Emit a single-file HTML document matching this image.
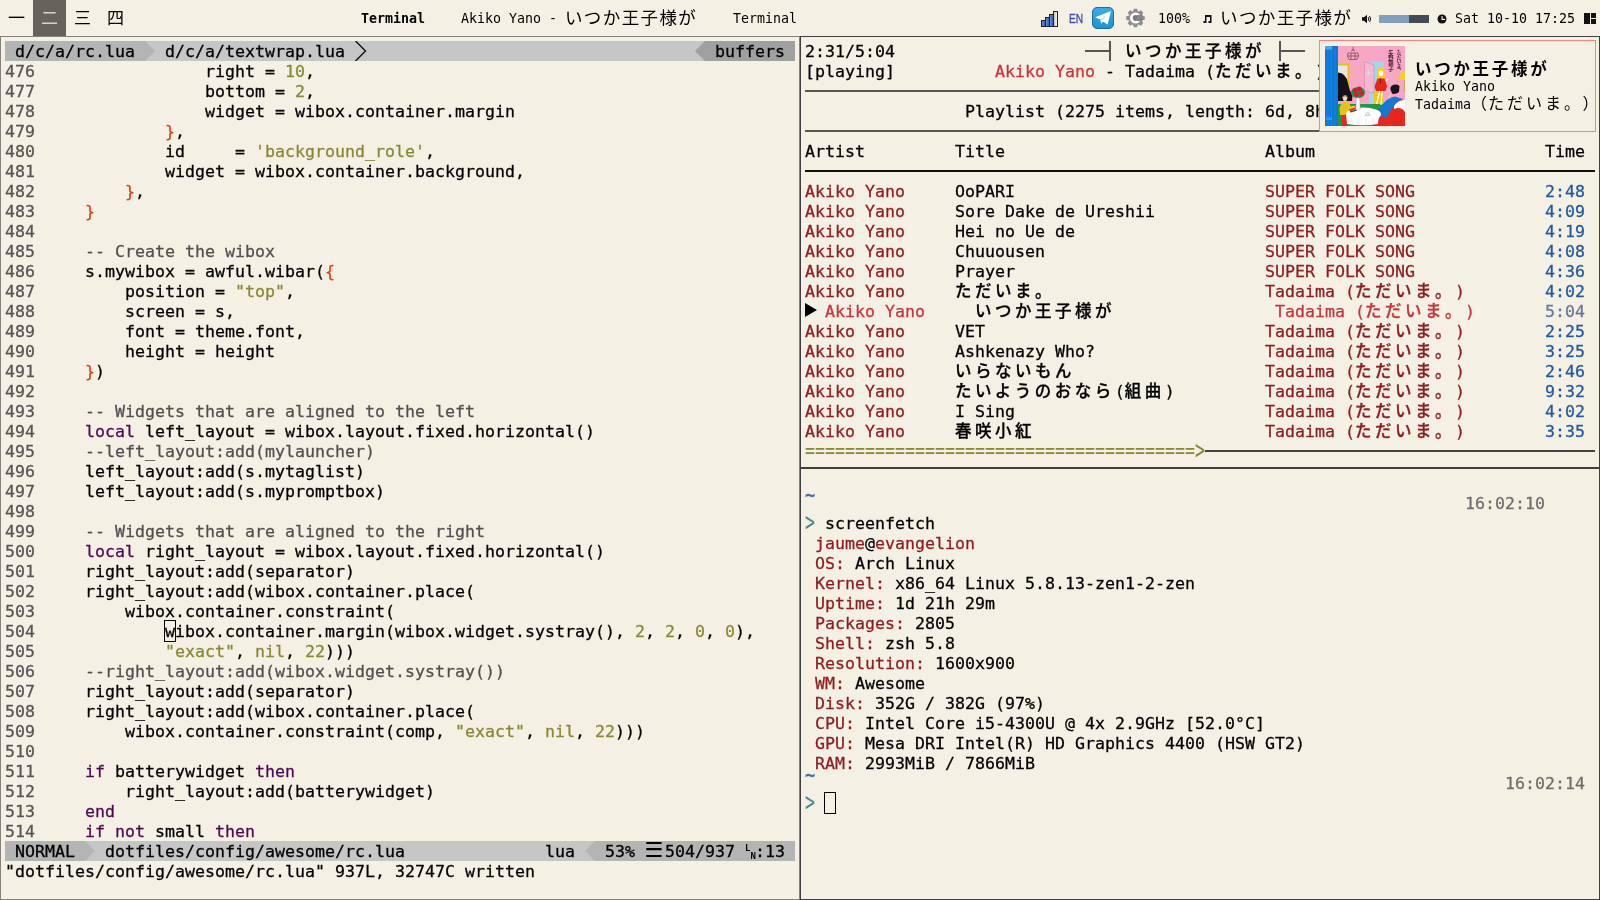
<!DOCTYPE html>
<html lang="ja">
<head>
<meta charset="utf-8">
<title>awesome desktop</title>
<style>
html,body{margin:0;padding:0}
body{width:1600px;height:900px;overflow:hidden;background:#f4f0e4;position:relative;
 font-family:"DejaVu Sans Mono","Liberation Mono","Noto Sans CJK JP",monospace;color:#000}
.abs{position:absolute}
.term,#bar,#notif{will-change:transform}
.win{position:absolute;box-sizing:border-box;border:1px solid #3e3e3e;background:#f4f0e4;overflow:hidden}
.term{position:absolute;font-size:16.61px;line-height:22px;-webkit-text-stroke:0.27px}
.r{height:20px;white-space:pre;position:relative}
.term .r[style]{position:absolute;left:0;width:790px}
.a{position:absolute;top:0}
.j{font-family:"Liberation Sans","Noto Sans CJK JP",sans-serif;font-size:16.5px;letter-spacing:3.5px;line-height:20px;text-spacing-trim:space-all;font-weight:500;-webkit-text-stroke:0.3px}
.j .w{display:inline-block;width:20px;letter-spacing:0}
.ln{color:#555}
.k{color:#4f0754}.s{color:#848a33}.n{color:#848a33}.c{color:#505050}.b{color:#d6440e}
.rd{color:#8e1b1e}.rl{color:#c8343a}.bu{color:#2059a2}.bl{color:#667a96}
.ts{color:#6e6e6e}.pr{color:#4a8c88;display:inline-block;transform:scaleY(1.65);transform-origin:50% 58%;-webkit-text-stroke:0}
.eq{display:inline-block;transform:scaleY(1.3);transform-origin:0 52%}
.til{color:#4470a0;font-size:17px;font-weight:bold;position:absolute;left:0;top:-9px;-webkit-text-stroke:0.3px}
.cur{width:10px;height:20px;border:1px solid #000;top:-1px}
.play{width:0;height:0;border-left:12px solid #000;border-top:7.500px solid transparent;border-bottom:7.500px solid transparent;top:2px}
.hl{position:absolute;height:2px;background:#555}
/* top bar */
#bar{position:absolute;left:0;top:0;width:1600px;height:36px;font-size:13.29px;line-height:38px;white-space:pre}
.tag{position:absolute;top:0;width:33px;height:36px;text-align:center;font-family:"Liberation Sans","Noto Sans CJK JP",sans-serif;font-size:17px;line-height:38px}
.tj{font-family:"Liberation Sans","Noto Sans CJK JP",sans-serif;font-size:17.5px;letter-spacing:1.4px;line-height:0;position:relative;top:1px}
.t{position:absolute;top:0}
.fw{display:inline-block;width:16.8px;letter-spacing:0;text-spacing-trim:space-all}
</style>
</head>
<body>
<!-- ================= top bar ================= -->
<div id="bar">
 <div class="tag" style="left:0">一</div>
 <div class="tag" style="left:33px;background:#66625c;color:#d6d2c6">二</div>
 <div class="tag" style="left:66px">三</div>
 <div class="tag" style="left:99px">四</div>
 <span class="t" style="left:361px;font-weight:bold">Terminal</span>
 <span class="t" style="left:461px">Akiko Yano - <span class="tj">いつか王子様が</span></span>
 <span class="t" style="left:733px">Terminal</span>
 <!-- signal -->
 <svg class="abs" style="left:1040px;top:10px" width="19" height="18" viewBox="0 0 19 18">
  <defs><linearGradient id="sg" x1="0" y1="0" x2="1" y2="0"><stop offset="0" stop-color="#6f9ae0"/><stop offset="1" stop-color="#2f55a8"/></linearGradient>
  <linearGradient id="sw" x1="0" y1="0" x2="1" y2="0"><stop offset="0" stop-color="#bdbdbd"/><stop offset="1" stop-color="#fafafa"/></linearGradient></defs>
  <rect x="1.5" y="10.5" width="4" height="6" fill="url(#sg)" stroke="#222"/>
  <rect x="5.5" y="7.5" width="4" height="9" fill="url(#sg)" stroke="#222"/>
  <rect x="9.5" y="4.5" width="4" height="12" fill="url(#sg)" stroke="#222"/>
  <rect x="13.5" y="1.5" width="4" height="15" fill="url(#sw)" stroke="#222"/>
 </svg>
 <span class="t" style="left:1069px;top:0;color:#444ca6;font-size:13.4px;transform:scaleX(.76);transform-origin:0 50%;-webkit-text-stroke:0.35px;font-family:'Liberation Sans','DejaVu Sans',sans-serif">EN</span>
 <!-- telegram -->
 <svg class="abs" style="left:1092px;top:7px" width="22" height="22" viewBox="0 0 22 22">
  <defs><linearGradient id="tg" x1="0" y1="0" x2="0" y2="1"><stop offset="0" stop-color="#36aee6"/><stop offset="1" stop-color="#1d93d0"/></linearGradient></defs>
  <rect x="0.5" y="0.5" width="21" height="21" rx="4.5" fill="url(#tg)" stroke="#1a6f9e"/>
  <path d="M3 10.2 L19 4 L15.6 17.6 L11 14.4 L9.2 16.8 L8.4 12.4 Z" fill="#fff"/>
  <path d="M8.4 12.4 L16 7 L10.6 13.6 L9.2 16.8 Z" fill="#d2e4f0"/>
 </svg>
 <!-- gear -->
 <svg class="abs" style="left:1125px;top:8px" width="21" height="20" viewBox="-10.5 -10 21 20">
  <g fill="#8e8e8e">
   <circle r="7.3"/>
   <rect x="-2.1" y="-9.3" width="4.2" height="18.6" rx="1.2"/>
   <rect x="-2.1" y="-9.3" width="4.2" height="18.6" rx="1.2" transform="rotate(45)"/>
   <rect x="-2.1" y="-9.3" width="4.2" height="18.6" rx="1.2" transform="rotate(90)"/>
   <rect x="-2.1" y="-9.3" width="4.2" height="18.6" rx="1.2" transform="rotate(135)"/>
  </g>
  <circle r="4.2" fill="#7a7a7a" stroke="#fff" stroke-width="2.6"/>
  <path d="M1.5 -3 L7 -3.4 L7 3.4 L1.5 3 Z" fill="#858585"/>
 </svg>
 <span class="t" style="left:1158px">100%</span>
 <svg class="abs" style="left:1203px;top:15px" width="9" height="8" viewBox="0 0 9 8"><path d="M2 0h6.5v8h-3v-2h1.5v-4h-3.5v6h-3v-2h1.5z" fill="#111"/></svg>
 <span class="t" style="left:1220px"><span class="tj">いつか王子様が</span></span>
 <!-- speaker -->
 <svg class="abs" style="left:1362px;top:14px" width="10" height="10" viewBox="0 0 10 10">
  <path d="M0 3.2h2L5 .8v8.4L2 6.8H0z" fill="#111"/>
  <path d="M6.2 3.2q1.2 1.8 0 3.6M7.6 2q2 3 0 6" stroke="#111" stroke-width="1" fill="none"/>
 </svg>
 <div class="abs" style="left:1379px;top:15px;width:50px;height:8px;background:#424a53"></div>
 <div class="abs" style="left:1379px;top:15px;width:30px;height:8px;background:#7f9fbe"></div>
 <!-- clock -->
 <svg class="abs" style="left:1437px;top:14px" width="10" height="10" viewBox="0 0 10 10">
  <circle cx="5" cy="5" r="4.5" fill="#111"/>
  <path d="M5 2v3.4h3" stroke="#f4f0e4" stroke-width="1.1" fill="none"/>
 </svg>
 <span class="t" style="left:1455px">Sat 10-10 17:25</span>
 <!-- layout icon -->
 <svg class="abs" style="left:1584px;top:13px" width="12" height="11" viewBox="0 0 12 11">
  <rect x="0" y="0" width="6" height="11" fill="#111"/>
  <rect x="7" y="0" width="5" height="5" fill="#111"/>
  <rect x="7" y="6" width="5" height="5" fill="#111"/>
 </svg>
</div>

<!-- ================= left window : vim ================= -->
<div class="win" style="left:0;top:36px;width:800px;height:864px;border-color:#85827c">
 <!-- tabline -->
 <div class="abs" style="left:4px;top:4px;width:790px;height:20px;background:#c6c6c6"></div>
 <div class="abs" style="left:4px;top:4px;width:140px;height:20px;background:#b4b4b4"></div>
 <svg class="abs" style="left:144px;top:4px" width="10" height="20"><path d="M0 0L10 10L0 20z" fill="#b4b4b4"/></svg>
 <svg class="abs" style="left:354px;top:4px" width="12" height="20"><path d="M0.5 0L10.5 10L0.5 20" fill="none" stroke="#111" stroke-width="1.4"/></svg>
 <svg class="abs" style="left:694px;top:4px" width="10" height="20"><path d="M10 0L0 10L10 20z" fill="#a0a0a0"/></svg>
 <div class="abs" style="left:704px;top:4px;width:90px;height:20px;background:#a0a0a0"></div>
 <!-- statusline -->
 <div class="abs" style="left:4px;top:804px;width:790px;height:20px;background:#c6c6c6"></div>
 <div class="abs" style="left:4px;top:804px;width:80px;height:20px;background:#b4b4b4"></div>
 <svg class="abs" style="left:84px;top:804px" width="10" height="20"><path d="M0 0L10 10L0 20z" fill="#b4b4b4"/></svg>
 <svg class="abs" style="left:584px;top:804px" width="10" height="20"><path d="M10 0L0 10L10 20z" fill="#b4b4b4"/></svg>
 <div class="abs" style="left:594px;top:804px;width:200px;height:20px;background:#b4b4b4"></div>
 <!-- cursor -->
 <div class="abs" style="left:163px;top:583px;width:10px;height:20px;border:1px solid #000"></div>
 <div class="term" style="left:4px;top:4px;width:790px">
<div class="r"> d/c/a/rc.lua   d/c/a/textwrap.lua<span class="a" style="left:700px"> buffers</span></div>
<div class="r"><span class="ln">476</span>                 right = <span class="n">10</span>,</div>
<div class="r"><span class="ln">477</span>                 bottom = <span class="n">2</span>,</div>
<div class="r"><span class="ln">478</span>                 widget = wibox.container.margin</div>
<div class="r"><span class="ln">479</span>             <span class="b">}</span>,</div>
<div class="r"><span class="ln">480</span>             id     = <span class="s">'background_role'</span>,</div>
<div class="r"><span class="ln">481</span>             widget = wibox.container.background,</div>
<div class="r"><span class="ln">482</span>         <span class="b">}</span>,</div>
<div class="r"><span class="ln">483</span>     <span class="b">}</span></div>
<div class="r"><span class="ln">484</span></div>
<div class="r"><span class="ln">485</span>     <span class="c">-- Create the wibox</span></div>
<div class="r"><span class="ln">486</span>     s.mywibox = awful.wibar(<span class="b">{</span></div>
<div class="r"><span class="ln">487</span>         position = <span class="s">"top"</span>,</div>
<div class="r"><span class="ln">488</span>         screen = s,</div>
<div class="r"><span class="ln">489</span>         font = theme.font,</div>
<div class="r"><span class="ln">490</span>         height = height</div>
<div class="r"><span class="ln">491</span>     <span class="b">}</span>)</div>
<div class="r"><span class="ln">492</span></div>
<div class="r"><span class="ln">493</span>     <span class="c">-- Widgets that are aligned to the left</span></div>
<div class="r"><span class="ln">494</span>     <span class="k">local</span> left_layout = wibox.layout.fixed.horizontal()</div>
<div class="r"><span class="ln">495</span>     <span class="c">--left_layout:add(mylauncher)</span></div>
<div class="r"><span class="ln">496</span>     left_layout:add(s.mytaglist)</div>
<div class="r"><span class="ln">497</span>     left_layout:add(s.mypromptbox)</div>
<div class="r"><span class="ln">498</span></div>
<div class="r"><span class="ln">499</span>     <span class="c">-- Widgets that are aligned to the right</span></div>
<div class="r"><span class="ln">500</span>     <span class="k">local</span> right_layout = wibox.layout.fixed.horizontal()</div>
<div class="r"><span class="ln">501</span>     right_layout:add(separator)</div>
<div class="r"><span class="ln">502</span>     right_layout:add(wibox.container.place(</div>
<div class="r"><span class="ln">503</span>         wibox.container.constraint(</div>
<div class="r"><span class="ln">504</span>             wibox.container.margin(wibox.widget.systray(), <span class="n">2</span>, <span class="n">2</span>, <span class="n">0</span>, <span class="n">0</span>),</div>
<div class="r"><span class="ln">505</span>             <span class="s">"exact"</span>, <span class="n">nil</span>, <span class="n">22</span>)))</div>
<div class="r"><span class="ln">506</span>     <span class="c">--right_layout:add(wibox.widget.systray())</span></div>
<div class="r"><span class="ln">507</span>     right_layout:add(separator)</div>
<div class="r"><span class="ln">508</span>     right_layout:add(wibox.container.place(</div>
<div class="r"><span class="ln">509</span>         wibox.container.constraint(comp, <span class="s">"exact"</span>, <span class="n">nil</span>, <span class="n">22</span>)))</div>
<div class="r"><span class="ln">510</span></div>
<div class="r"><span class="ln">511</span>     <span class="k">if</span> batterywidget <span class="k">then</span></div>
<div class="r"><span class="ln">512</span>         right_layout:add(batterywidget)</div>
<div class="r"><span class="ln">513</span>     <span class="k">end</span></div>
<div class="r"><span class="ln">514</span>     <span class="k">if</span> <span class="k">not</span> small <span class="k">then</span></div>
<div class="r"> NORMAL   dotfiles/config/awesome/rc.lua<span class="a" style="left:540px">lua   53%<span class="a" style="left:99.500px;top:-2px;font-size:21px;-webkit-text-stroke:0;font-family:'DejaVu Sans','Liberation Sans',sans-serif">☰</span>   504/937<span class="a" style="left:200px;top:3px;font-size:9px;line-height:8px;font-weight:bold;-webkit-text-stroke:0">L<br> N</span>  :13</span></div>
<div class="r">"dotfiles/config/awesome/rc.lua" 937L, 32747C written</div>
 </div>
</div>

<!-- ================= right top : ncmpcpp ================= -->
<div class="win" style="left:800px;top:36px;width:800px;height:432px">
 <div class="term" style="left:4px;top:4px;width:790px;height:424px">
<div class="r" style="top:0">2:31/5:04<span class="a" style="left:320px"><span class="j">いつか王子様が</span></span></div>
<div class="r" style="top:20px">[playing]<span class="a rl" style="left:190px">Akiko Yano</span><span class="a" style="left:300px">- Tadaima (<span class="j">ただいま<span class="w">。</span></span>)</span></div>
<div class="r" style="top:60px"><span class="a" style="left:160px">Playlist (2275 items, length: 6d, 8h</span></div>
<div class="r" style="top:100px">Artist<span class="a" style="left:150px">Title</span><span class="a" style="left:460px">Album</span><span class="a" style="left:740px">Time</span></div>
<div class="r" style="top:140px"><span class="a rd" style="left:0px">Akiko Yano</span><span class="a " style="left:150px">OoPARI</span><span class="a rd" style="left:460px">SUPER FOLK SONG</span><span class="a bu" style="left:740px">2:48</span></div>
<div class="r" style="top:160px"><span class="a rd" style="left:0px">Akiko Yano</span><span class="a " style="left:150px">Sore Dake de Ureshii</span><span class="a rd" style="left:460px">SUPER FOLK SONG</span><span class="a bu" style="left:740px">4:09</span></div>
<div class="r" style="top:180px"><span class="a rd" style="left:0px">Akiko Yano</span><span class="a " style="left:150px">Hei no Ue de</span><span class="a rd" style="left:460px">SUPER FOLK SONG</span><span class="a bu" style="left:740px">4:19</span></div>
<div class="r" style="top:200px"><span class="a rd" style="left:0px">Akiko Yano</span><span class="a " style="left:150px">Chuuousen</span><span class="a rd" style="left:460px">SUPER FOLK SONG</span><span class="a bu" style="left:740px">4:08</span></div>
<div class="r" style="top:220px"><span class="a rd" style="left:0px">Akiko Yano</span><span class="a " style="left:150px">Prayer</span><span class="a rd" style="left:460px">SUPER FOLK SONG</span><span class="a bu" style="left:740px">4:36</span></div>
<div class="r" style="top:240px"><span class="a rd" style="left:0px">Akiko Yano</span><span class="a " style="left:150px"><span class="j">ただいま<span class="w">。</span></span></span><span class="a rd" style="left:460px">Tadaima (<span class="j">ただいま<span class="w">。</span></span>)</span><span class="a bu" style="left:740px">4:02</span></div>
<div class="r" style="top:260px"><span class="a play" style="left:0"></span><span class="a rl" style="left:20px">Akiko Yano</span><span class="a " style="left:170px"><span class="j">いつか王子様が</span></span><span class="a rl" style="left:470px">Tadaima (<span class="j">ただいま<span class="w">。</span></span>)</span><span class="a bl" style="left:740px">5:04</span></div>
<div class="r" style="top:280px"><span class="a rd" style="left:0px">Akiko Yano</span><span class="a " style="left:150px">VET</span><span class="a rd" style="left:460px">Tadaima (<span class="j">ただいま<span class="w">。</span></span>)</span><span class="a bu" style="left:740px">2:25</span></div>
<div class="r" style="top:300px"><span class="a rd" style="left:0px">Akiko Yano</span><span class="a " style="left:150px">Ashkenazy Who?</span><span class="a rd" style="left:460px">Tadaima (<span class="j">ただいま<span class="w">。</span></span>)</span><span class="a bu" style="left:740px">3:25</span></div>
<div class="r" style="top:320px"><span class="a rd" style="left:0px">Akiko Yano</span><span class="a " style="left:150px"><span class="j">いらないもん</span></span><span class="a rd" style="left:460px">Tadaima (<span class="j">ただいま<span class="w">。</span></span>)</span><span class="a bu" style="left:740px">2:46</span></div>
<div class="r" style="top:340px"><span class="a rd" style="left:0px">Akiko Yano</span><span class="a " style="left:150px"><span class="j">たいようのおなら</span>(<span class="j">組曲</span>)</span><span class="a rd" style="left:460px">Tadaima (<span class="j">ただいま<span class="w">。</span></span>)</span><span class="a bu" style="left:740px">9:32</span></div>
<div class="r" style="top:360px"><span class="a rd" style="left:0px">Akiko Yano</span><span class="a " style="left:150px">I Sing</span><span class="a rd" style="left:460px">Tadaima (<span class="j">ただいま<span class="w">。</span></span>)</span><span class="a bu" style="left:740px">4:02</span></div>
<div class="r" style="top:380px"><span class="a rd" style="left:0px">Akiko Yano</span><span class="a " style="left:150px"><span class="j">春咲小紅</span></span><span class="a rd" style="left:460px">Tadaima (<span class="j">ただいま<span class="w">。</span></span>)</span><span class="a bu" style="left:740px">3:35</span></div>
<div class="r s" style="top:400px;-webkit-text-stroke:0"><span class="eq">=======================================</span><span class="pr" style="color:inherit">&gt;</span></div>
 </div>
 <!-- box drawing -->
 <div class="hl" style="left:284px;top:13px;width:26px"></div>
 <div class="hl" style="left:308px;top:4px;width:2px;height:20px"></div>
 <div class="hl" style="left:479px;top:13px;width:25px"></div>
 <div class="hl" style="left:478px;top:4px;width:2px;height:20px"></div>
 <div class="hl" style="left:4px;top:53px;width:790px"></div>
 <div class="hl" style="left:4px;top:93px;width:790px"></div>
 <div class="hl" style="left:4px;top:133px;width:790px;background:#111"></div>
 <div class="hl" style="left:404px;top:413px;width:390px;background:#444"></div>
</div>

<!-- ================= right bottom : zsh ================= -->
<div class="win" style="left:800px;top:468px;width:800px;height:432px">
 <div class="term" style="left:4px;top:4px;width:790px">
<div class="r"></div>
<div class="r"><span class="til">~</span><span class="a ts" style="left:660px">16:02:10</span></div>
<div class="r"><span class="pr">&gt;</span> screenfetch</div>
<div class="r"> <span class="rd">jaume</span>@<span class="rd">evangelion</span></div>
<div class="r"> <span class="rd">OS:</span> Arch Linux</div>
<div class="r"> <span class="rd">Kernel:</span> x86_64 Linux 5.8.13-zen1-2-zen</div>
<div class="r"> <span class="rd">Uptime:</span> 1d 21h 29m</div>
<div class="r"> <span class="rd">Packages:</span> 2805</div>
<div class="r"> <span class="rd">Shell:</span> zsh 5.8</div>
<div class="r"> <span class="rd">Resolution:</span> 1600x900</div>
<div class="r"> <span class="rd">WM:</span> Awesome</div>
<div class="r"> <span class="rd">Disk:</span> 352G / 382G (97%)</div>
<div class="r"> <span class="rd">CPU:</span> Intel Core i5-4300U @ 4x 2.9GHz [52.0°C]</div>
<div class="r"> <span class="rd">GPU:</span> Mesa DRI Intel(R) HD Graphics 4400 (HSW GT2)</div>
<div class="r"> <span class="rd">RAM:</span> 2993MiB / 7866MiB</div>
<div class="r"><span class="til">~</span><span class="a ts" style="left:700px">16:02:14</span></div>
<div class="r"><span class="pr">&gt;</span><span class="a cur" style="left:19px"></span></div>
 </div>
</div>

<!-- ================= notification ================= -->
<div class="abs" id="notif" style="left:1319px;top:40px;width:277px;height:92px;box-sizing:border-box;border:1px solid #ff8080;background:#f4f0e4">
 <svg class="abs" style="left:5px;top:5px" width="80" height="80" viewBox="0 0 80 80">
  <rect width="80" height="80" fill="#f7a6c3"/>
  <!-- floor -->
  <path d="M13 58H62V80H13z" fill="#1c9a44"/>
  <!-- door + sky -->
  <rect x="44" y="15.5" width="15" height="42.5" fill="#a4d4f2"/>
  <rect x="49" y="45" width="10" height="13" fill="#f0c814"/>
  <path d="M39.5 15.5L49 19V47L39.5 45z" fill="#f9b6cf" stroke="#c8809a" stroke-width=".5"/>
  <path d="M43.5 24.5l1.4 2.6-1.4 2.6-1.4-2.6z" fill="#c8e6f6"/>
  <!-- frame -->
  <rect x="13" y="17.5" width="11.5" height="22" fill="#e6c60a"/>
  <rect x="13" y="19.5" width="9.5" height="18" fill="#e9e6e2"/>
  <!-- piano -->
  <path d="M13 26.5Q21 27 23 37Q24 44 27.5 49.5L27 55H13z" fill="#15121a"/>
  <!-- chandelier -->
  <g fill="none" stroke="#7a3e58" stroke-width=".7"><path d="M28 1v4M23 7h10M22.5 10h11M24 13.5h8M23 7l-.5 3 1.5 3.500M33 7l.5 3-1.5 3.500M26 7v6.500M30 7v6.500M26 5l2-1.500 2 1.500"/></g>
  <!-- lamp -->
  <path d="M76 26h4v8h-7z" fill="#f0d21c"/><path d="M79.500 34v12" stroke="#b89a30" stroke-width=".6"/>
  <!-- girl -->
  <path d="M52.500 24Q52 21.500 56 21.500Q60 21.500 59.500 25L60.500 34H51.500z" fill="#f2d21e"/>
  <ellipse cx="56" cy="27.300" rx="2.300" ry="2.800" fill="#fdf6f0"/>
  <path d="M52.500 32.500h7l2.500 8-1.500 4.500h-9.500l-1.500-4.500z" fill="#e8241c"/>
  <path d="M55.500 32v6" stroke="#5a1010" stroke-width=".6"/>
  <path d="M54.800 45L51.500 58M57.200 45L56 59" stroke="#fdf6f0" stroke-width="1.400" fill="none"/>
  <path d="M50.500 58.500l2 1.200M55.500 59.500l2 1" stroke="#e8241c" stroke-width="1"/>
  <path d="M61.500 35l1.500-2" stroke="#fdf6f0" stroke-width="1.200"/>
  <!-- armchair + man -->
  <path d="M48 72Q52 62 62 58L72 53Q78 53 80 56V80H48z" fill="#e8261c"/>
  <path d="M69 60Q72 54 80 54V66Q76 60 69 63z" fill="#fdfdfd"/>
  <path d="M50 70L58 58Q62 52 70 50.500L78 53Q70 56 66 64L62 71z" fill="#1478d6"/>
  <path d="M66.500 46Q64 42 67 39.500Q71 37.500 74.500 40L74 46Q71 48.500 67.500 48z" fill="#1a1418"/>
  <path d="M62 50l2.500-3 2.500 2-2 3.500z" fill="#f4b8c4"/>
  <path d="M72 80V68M76 80V66" stroke="#c01c18" stroke-width=".5" opacity=".6"/>
  <!-- woman left + chair -->
  <g transform="translate(3.500 4)"><path d="M13 63h6.500v13H13z" fill="#e8261c"/>
  <path d="M11 58Q13 52 17 51.500L21 53l2 8-4 2.500-3 1.500H11.500z" fill="#e8c21a"/>
  <ellipse cx="16.500" cy="48.500" rx="2.200" ry="2.600" fill="#f3dcc0"/>
  <path d="M14 48Q14.500 45 17 45.500Q19 46 18.800 48" fill="none" stroke="#c9a53a" stroke-width="1"/></g>
  <!-- table -->
  <ellipse cx="38.500" cy="68" rx="17.500" ry="6.500" fill="#fdfdfd"/>
  <path d="M21 69H56Q53 72 53 78Q38 80.500 22 78z" fill="#fdfdfd"/>
  <path d="M27 72v6.500M33 73v6M41 73v6M48 72v6" stroke="#d8d8de" stroke-width=".5"/>
  <path d="M23 61l6.500-1.500 2.500 5-6.500 2z" fill="#f2c81c"/>
  <path d="M24 63.200l6.800-1.800.8 1.600-6.800 1.900z" fill="#e8241c"/>
  <path d="M25 65.300l6.600-1.900.5 1.100-6.500 2z" fill="#2a3a9a"/>
  <path d="M41 67.500q1.500-3 3-.2l1 2.200h-5z" fill="#eceaf0" stroke="#9a98a8" stroke-width=".4"/>
  <!-- roses -->
  <ellipse cx="33" cy="46.500" rx="7" ry="5.500" fill="#2a8a46"/>
  <circle cx="30" cy="44.500" r="2.300" fill="#d81a2c"/><circle cx="34.500" cy="43" r="2.400" fill="#d81a2c"/>
  <circle cx="36.500" cy="47.500" r="2.200" fill="#d81a2c"/><circle cx="31.500" cy="48.500" r="2.200" fill="#d81a2c"/>
  <path d="M31.500 52h3l.7 11.500h-4.400z" fill="#f6f6fa" stroke="#b8b8c4" stroke-width=".4"/>
  <!-- strip -->
  <rect x="0" y="0" width="13" height="80" fill="#0b79d8"/>
  <path d="M3 0v80M6.500 0v80M10 0v80" stroke="#2a8ce2" stroke-width=".5"/>
  <rect x="0" y="0" width="7" height="3.500" fill="#5aa2e6"/>
  <text x="1" y="74" font-size="4" fill="#9cc8f0" font-family="'Liberation Sans',sans-serif">CD</text>
  <!-- cover lettering -->
  <text x="73.500" y="4" font-size="4.600" fill="#4a2038" style="writing-mode:vertical-rl" font-family="'Liberation Sans','Noto Sans CJK JP',sans-serif" font-weight="bold">ただいま。</text>
  <text x="66" y="4" font-size="5.300" fill="#4a2038" style="writing-mode:vertical-rl" font-family="'Liberation Sans','Noto Sans CJK JP',sans-serif" font-weight="bold">矢野顕子</text>
 </svg>
 <div class="abs" style="left:95px;top:16px;font-family:'Liberation Sans','Noto Sans CJK JP',sans-serif;font-weight:bold;font-size:16.5px;letter-spacing:2.7px;line-height:24px;white-space:pre">いつか王子様が</div>
 <div class="abs" style="left:95px;top:38px;font-size:13.29px;line-height:16px;white-space:pre">Akiko Yano</div>
 <div class="abs" style="left:95px;top:54px;font-size:13.29px;line-height:20px;white-space:pre">Tadaima<span style="font-family:'Liberation Sans','Noto Sans CJK JP',sans-serif;font-size:16px;letter-spacing:3px;line-height:0;position:relative;top:0px"><span class="fw" style="width:17px">（</span>ただいま<span class="fw" style="width:18.500px">。</span><span class="fw">）</span></span></div>
</div>
</body>
</html>
